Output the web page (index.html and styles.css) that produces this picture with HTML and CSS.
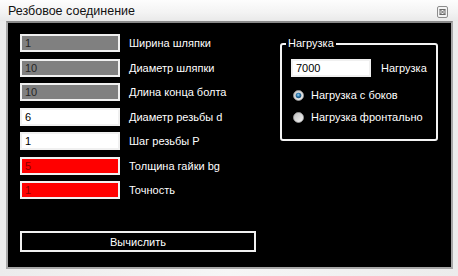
FILE: index.html
```html
<!DOCTYPE html>
<html lang="ru">
<head>
<meta charset="utf-8">
<title>Резбовое соединение</title>
<link rel="stylesheet" href="styles.css">
</head>
<body>
<div class="window">
  <div class="titlebar">
    <span class="title">Резбовое соединение</span>
    <span class="close">
      <svg width="11" height="12" viewBox="0 0 11 12">
        <rect x="0.5" y="0.5" width="10" height="11" rx="1.5" fill="#f4f4f4" stroke="#8c8c8c"/>
        <rect x="3" y="3.5" width="5" height="5" fill="none" stroke="#6a6a6a" stroke-width="1"/>
        <path d="M3 3.5 L8 8.5 M8 3.5 L3 8.5" stroke="#6a6a6a" stroke-width="1"/>
      </svg>
    </span>
  </div>
  <div class="frame">
    <div class="panel">
      <div class="left">
        <div class="fields">
          <div class="box gray">1</div><span class="label">Ширина шляпки</span>
          <div class="box gray">10</div><span class="label">Диаметр шляпки</span>
          <div class="box gray">10</div><span class="label">Длина конца болта</span>
          <div class="box white">6</div><span class="label">Диаметр резьбы d</span>
          <div class="box white">1</div><span class="label">Шаг резьбы P</span>
          <div class="box red">5</div><span class="label">Толщина гайки bg</span>
          <div class="box red">1</div><span class="label">Точность</span>
        </div>
        <div class="button">Вычислить</div>
      </div>
      <fieldset class="group">
        <legend>Нагрузка</legend>
        <div class="load-row">
          <div class="box white load">7000</div>
          <span class="label">Нагрузка</span>
        </div>
        <div class="radio">
          <svg width="11" height="11" viewBox="0 0 11 11">
            <defs>
              <radialGradient id="sel" cx="0.45" cy="0.4" r="0.6">
                <stop offset="0" stop-color="#9fd3f2"/>
                <stop offset="0.5" stop-color="#2b78ad"/>
                <stop offset="1" stop-color="#17476b"/>
              </radialGradient>
              <linearGradient id="ring" x1="0" y1="0" x2="1" y2="1">
                <stop offset="0" stop-color="#c4c4c4"/>
                <stop offset="1" stop-color="#f4f4f4"/>
              </linearGradient>
            </defs>
            <circle cx="5.5" cy="5.5" r="5" fill="url(#ring)" stroke="#9a9a9a" stroke-width="0.8"/>
            <circle cx="5.5" cy="5.5" r="2.8" fill="url(#sel)"/>
          </svg>
          <span class="label">Нагрузка с боков</span>
        </div>
        <div class="radio">
          <svg width="11" height="11" viewBox="0 0 11 11">
            <defs>
              <linearGradient id="off" x1="0" y1="0" x2="1" y2="1">
                <stop offset="0" stop-color="#bdbdbd"/>
                <stop offset="1" stop-color="#f6f6f6"/>
              </linearGradient>
            </defs>
            <circle cx="5.5" cy="5.5" r="5" fill="url(#off)" stroke="#a0a0a0" stroke-width="0.8"/>
          </svg>
          <span class="label">Нагрузка фронтально</span>
        </div>
      </fieldset>
    </div>
  </div>
</div>
</body>
</html>
```

FILE: styles.css
```css
* { box-sizing: border-box; }
html, body { margin: 0; padding: 0; }
body {
  width: 458px;
  height: 276px;
  overflow: hidden;
  background: #e4e4e4;
  font-family: "Liberation Sans", Arial, sans-serif;
  font-size: 11px;
}
.window {
  width: 458px;
  height: 276px;
  display: flex;
  flex-direction: column;
  background: linear-gradient(90deg, #ececec 0%, #f6f6f6 50%, #ececec 100%);
}
.titlebar {
  height: 21px;
  display: flex;
  align-items: center;
  justify-content: space-between;
  padding: 0 10px 0 8px;
  background: linear-gradient(180deg, #fdfdfd 0%, #f3f3f3 60%, #e9e9e9 100%);
}
.title {
  font-family: "Liberation Sans", Arial, sans-serif;
  font-size: 12.5px;
  color: #111;
  margin-top: 1px;
}
.close { display: flex; margin-top: 2px; }
.frame {
  flex: 1;
  padding: 0 5px 6px 6px;
}
.panel {
  height: 248px;
  background: #000;
  border: 2px solid #a8a8a8;
  border-top-color: #8a8a8a;
  display: flex;
  padding: 11px 0 0 12px;
  color: #fff;
}
.left {
  width: 260px;
  display: flex;
  flex-direction: column;
}
.fields {
  display: grid;
  grid-template-columns: 100px auto;
  grid-auto-rows: 18px;
  row-gap: 6.5px;
  column-gap: 9px;
  align-items: center;
}
.box {
  height: 18px;
  border: 2px solid #f0f0f0;
  padding: 0 3px;
  line-height: 14px;
  font-size: 11px;
}
.gray { background: #808080; color: #262626; }
.white { background: #fff; color: #000; }
.red { background: #ff0000; color: #8a0000; }
.label { color: #fff; white-space: nowrap; }
.button {
  margin-top: 32px;
  width: 236px;
  height: 21px;
  border: 2px solid #f0f0f0;
  display: flex;
  align-items: center;
  justify-content: center;
  color: #fff;
}
.group {
  margin: 3px 0 0 0;
  width: 158px;
  height: 104px;
  border: 2px solid #f4f4f4;
  border-radius: 3px;
  padding: 9px 0 0 4px;
  min-width: 0;
}
.group legend {
  padding: 0 2px;
  color: #fff;
  font-size: 11px;
  line-height: 13px;
}
.load-row {
  display: flex;
  align-items: center;
  gap: 10px;
  margin-left: 5px;
}
.load { width: 80px; }
.radio {
  display: flex;
  align-items: center;
  gap: 7px;
  margin: 0 0 0 7px;
  height: 22px;
}
.load-row + .radio { margin-top: 7px; }
```
